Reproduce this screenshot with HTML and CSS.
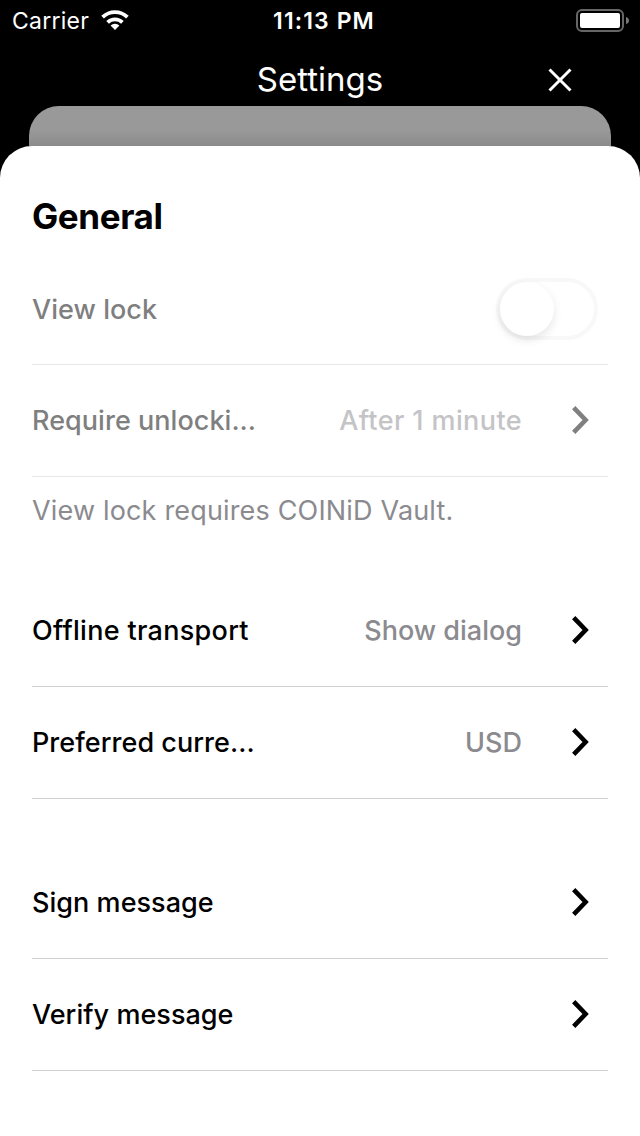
FILE: index.html
```html
<!DOCTYPE html>
<html lang="en">
<head>
<meta charset="utf-8">
<title>Settings</title>
<link rel="stylesheet" href="styles.css">
</head>
<body>
<div class="status">
  <div class="carrier"><span class="carrier-name">Carrier</span>
    <svg width="28" height="20" viewBox="0 0 28 20"><path d="M14 20 9.6 15.6a6.4 6.4 0 0 1 8.8 0Z" fill="#fff"/><path d="M6.6 12.3a10.6 10.6 0 0 1 14.8 0M1.6 7.1a17.8 17.8 0 0 1 24.8 0" fill="none" stroke="#fff" stroke-width="3.8"/></svg>
  </div>
  <span class="time">11:13 PM</span>
  <svg class="battery" width="54" height="24" viewBox="0 0 54 24"><rect x="1" y="1" width="46" height="21" rx="5" fill="none" stroke="#666" stroke-width="2"/><rect x="4" y="4" width="40" height="15" rx="2" fill="#fff"/><path d="M50 8q3 1 3 3.5t-3 3.5Z" fill="#777"/></svg>
</div>
<header class="header">
  <h1 class="title">Settings</h1>
  <svg class="close" width="24" height="24" viewBox="0 0 24 24"><path d="M1.5 1.5l21 21M22.5 1.5l-21 21" stroke="#fff" stroke-width="3"/></svg>
</header>
<div class="back-card"></div>
<main class="sheet">
  <h2 class="heading">General</h2>
  <div class="row disabled lock"><span class="label">View lock</span><span class="toggle"><span class="knob"></span></span></div>
  <div class="row disabled"><span class="label">Require unlocki...</span><span class="value after">After 1 minute</span><svg class="chevron" width="18" height="28" viewBox="0 0 18 28"><path d="M1.7 1.7L13.6 14L1.7 26.3"/></svg></div>
  <p class="note">View lock requires COINiD Vault.</p>
  <div class="row"><span class="label offline">Offline transport</span><span class="value">Show dialog</span><svg class="chevron" width="18" height="28" viewBox="0 0 18 28"><path d="M1.7 1.7L13.6 14L1.7 26.3"/></svg></div>
  <div class="row last"><span class="label">Preferred curre...</span><span class="value">USD</span><svg class="chevron" width="18" height="28" viewBox="0 0 18 28"><path d="M1.7 1.7L13.6 14L1.7 26.3"/></svg></div>
  <div class="row"><span class="label">Sign message</span><svg class="chevron" width="18" height="28" viewBox="0 0 18 28"><path d="M1.7 1.7L13.6 14L1.7 26.3"/></svg></div>
  <div class="row"><span class="label">Verify message</span><svg class="chevron" width="18" height="28" viewBox="0 0 18 28"><path d="M1.7 1.7L13.6 14L1.7 26.3"/></svg></div>
</main>
</body>
</html>
```
FILE: styles.css
```css
* { box-sizing: border-box; }
body { margin: 0; height: 1136px; overflow: hidden; background: #000; color: #000; font-family: Inter, "Liberation Sans", sans-serif; display: flex; flex-direction: column; }
svg { display: block; flex: none; }
.status { height: 40px; flex: none; display: grid; grid-template-columns: 1fr auto 1fr; align-items: center; padding: 2px 10px 0 12px; color: #fff; font-size: 23px; }
.carrier { display: flex; align-items: center; gap: 12px; }
.carrier-name { letter-spacing: .25px; }
.carrier svg { margin-top: -2px; }
.time { font-weight: 600; letter-spacing: 1.1px; margin-left: 6px; }
.battery { justify-self: end; }
.header { height: 66px; flex: none; display: grid; grid-template-columns: 1fr auto 1fr; align-items: center; color: #fff; padding-top: 14px; }
.title { grid-column: 2; margin: -2px 0 0; font-size: 33px; line-height: 40px; font-weight: 400; }
.close { justify-self: end; margin-right: 68px; }
.back-card { height: 40px; flex: none; margin: 0 29px; background: linear-gradient(#999 60%, #8b8b8b); border-radius: 30px 30px 0 0; }
.sheet { flex: 1; background: #fff; border-radius: 32px 32px 0 0; padding: 48px 32px 0; }
.heading { margin: 0 0 1px; font-size: 35px; line-height: 44px; font-weight: 700; letter-spacing: -.4px; }
.row { height: 112px; display: flex; align-items: center; border-bottom: 1px solid #d1d1d4; padding-bottom: 1px; font-size: 27px; line-height: 36px; white-space: nowrap; }
.row.lock { height: 126px; padding: 14px 0 0; }
.row.disabled { border-color: #e8e8e9; }
.label, .value { padding-top: 2px; }
.label { font-weight: 500; letter-spacing: .04px; }
.label.offline { letter-spacing: .3px; }
.disabled .label, .disabled .chevron { color: #7f7f7f; }
.value { margin-left: auto; margin-right: 50px; color: #8a8a8f; font-weight: 500; }
.value.after { letter-spacing: .4px; }
.disabled .value { color: #c4c4c7; }
.chevron { margin-right: 18px; }
.chevron path { fill: none; stroke: currentColor; stroke-width: 4.6; }
.label + .chevron { margin-left: auto; }
.toggle { width: 102px; height: 62px; margin-left: auto; margin-right: 10px; border: 4px solid #f8f8f8; border-radius: 31px; }
.knob { display: block; width: 54px; height: 54px; border-radius: 50%; background: #fff; box-shadow: 0 4px 10px #0000001a; }
.note { height: 98px; margin: 0; padding-top: 16px; font-size: 27px; line-height: 36px; color: #8a8a8f; letter-spacing: .17px; }
.row.last { margin-bottom: 48px; }
```
